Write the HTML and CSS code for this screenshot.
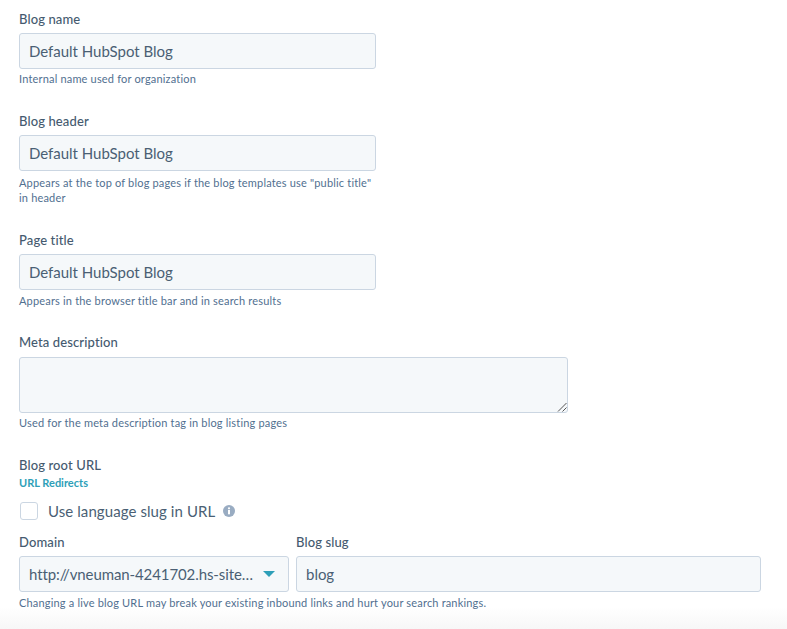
FILE: index.html
```html
<!DOCTYPE html>
<html lang="en">
<head>
<meta charset="utf-8">
<title>Blog settings</title>
<link rel="stylesheet" href="styles.css">
</head>
<body>
<form class="form">
  <div class="field gap-a">
    <div class="label">Blog name</div>
    <div class="input narrow">Default HubSpot Blog</div>
    <div class="help help-tight">Internal name used for organization</div>
  </div>
  <div class="field gap-a">
    <div class="label">Blog header</div>
    <div class="input narrow">Default HubSpot Blog</div>
    <div class="help help-loose help-wrap">Appears at the top of blog pages if the blog templates use "public title" in header</div>
  </div>
  <div class="field gap-c">
    <div class="label">Page title</div>
    <div class="input narrow">Default HubSpot Blog</div>
    <div class="help">Appears in the browser title bar and in search results</div>
  </div>
  <div class="field gap-a">
    <div class="label">Meta description</div>
    <div class="textarea">
      <svg class="grip" width="10" height="10" viewBox="0 0 10 10"><path d="M1 9.5 9.5 1M5.5 9.5 9.5 5.5" stroke="#555" stroke-width="1" fill="none"/></svg>
    </div>
    <div class="help help-tight">Used for the meta description tag in blog listing pages</div>
  </div>
  <div class="field">
    <div class="label label-flush">Blog root URL</div>
    <a class="link" href="#">URL Redirects</a>
    <div class="check-row">
      <span class="checkbox"></span>
      <span class="check-text">Use language slug in URL</span>
      <svg class="info" width="12" height="12" viewBox="0 0 12 12"><circle cx="6" cy="6" r="6" fill="#99acc2"/><circle cx="6" cy="3.3" r="1.1" fill="#fff"/><rect x="5" y="5" width="2" height="4.3" fill="#fff"/></svg>
    </div>
    <div class="url-row">
      <div class="col-domain">
        <div class="label">Domain</div>
        <div class="input select"><span class="select-text">http://vneuman-4241702.hs-site…</span><span class="caret"></span></div>
      </div>
      <div class="col-slug">
        <div class="label">Blog slug</div>
        <div class="input">blog</div>
      </div>
    </div>
    <div class="help">Changing a live blog URL may break your existing inbound links and hurt your search rankings.</div>
  </div>
</form>
<div class="shade"></div>
</body>
</html>
```
FILE: styles.css
```css
html, body { margin: 0; padding: 0; height: 100%; overflow: hidden; background: #fff; }
body { font-family: Lato, "Open Sans", sans-serif; color: #33475b; position: relative; }
.form { padding: 10px 26px 0 19px; width: 787px; box-sizing: border-box; position: relative; z-index: 1; }
.field { display: block; }
.gap-a { margin-bottom: 26px; }
.gap-c { margin-bottom: 25px; }
.label { font-size: 13px; line-height: 18px; height: 18px; margin-bottom: 5px; letter-spacing: 0.12px; font-weight: 500; color: #455a6f; }
.label-flush { margin-bottom: 0; }
.input { box-sizing: border-box; height: 36px; background: #f5f8fa; border: 1px solid #cbd6e2; border-radius: 3px; padding: 0 9px; font-size: 15px; line-height: 34px; letter-spacing: -0.02px; color: #4a5f74; white-space: nowrap; }
.narrow { width: 357px; }
.help { font-size: 11px; line-height: 15px; margin-top: 3px; letter-spacing: 0.18px; color: #516f90; }
.help-tight { margin-top: 2px; }
.help-loose { margin-top: 4px; }
.help-wrap { width: 358px; }
.textarea { box-sizing: border-box; width: 549px; height: 56px; margin-top: 6px; background: #f5f8fa; border: 1px solid #cbd6e2; border-radius: 3px; position: relative; }
.grip { position: absolute; right: 0; bottom: 0; }
.link { display: block; font-size: 11px; line-height: 15px; color: #2e9fb8; font-weight: 700; text-decoration: none; margin-top: 1px; }
.check-row { display: flex; align-items: center; margin-top: 11px; height: 20px; }
.checkbox { box-sizing: border-box; width: 18px; height: 18px; margin-left: 1px; background: #fff; border: 1px solid #cbd6e2; border-radius: 3px; }
.check-text { font-size: 15px; letter-spacing: 0.08px; margin-left: 10px; color: #4a5f74; }
.info { margin-left: 8px; }
.url-row { display: flex; gap: 7px; margin-top: 12px; }
.col-domain { width: 270px; }
.col-slug { width: 465px; }
.select { display: flex; align-items: center; justify-content: space-between; padding-right: 13px; }
.select-text { overflow: hidden; letter-spacing: -0.1px; }
.caret { width: 0; height: 0; border-left: 6px solid transparent; border-right: 6px solid transparent; border-top: 6px solid #2e9fb8; }
.shade { position: absolute; left: 0; right: 0; bottom: 0; height: 22px; background: linear-gradient(#fff, #f7f7f7); }
```
